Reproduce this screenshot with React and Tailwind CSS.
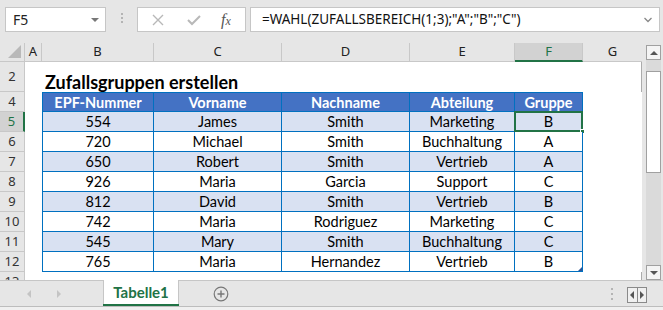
import React from "react";

const colW = ["w-[112px]", "w-[128px]", "w-[128px]", "w-[105px]", "w-[68px]"];
const headers = ["EPF-Nummer", "Vorname", "Nachname", "Abteilung", "Gruppe"];
const data = [
  ["554", "James", "Smith", "Marketing", "B"],
  ["720", "Michael", "Smith", "Buchhaltung", "A"],
  ["650", "Robert", "Smith", "Vertrieb", "A"],
  ["926", "Maria", "Garcia", "Support", "C"],
  ["812", "David", "Smith", "Vertrieb", "B"],
  ["742", "Maria", "Rodriguez", "Marketing", "C"],
  ["545", "Mary", "Smith", "Buchhaltung", "C"],
  ["765", "Maria", "Hernandez", "Vertrieb", "B"],
];

const colHeads = [
  { l: "A", w: "w-[17px]" },
  { l: "B", w: "w-[112px]" },
  { l: "C", w: "w-[128px]" },
  { l: "D", w: "w-[128px]" },
  { l: "E", w: "w-[105px]" },
  { l: "F", w: "w-[68px]", active: true },
  { l: "G", w: "w-[59px]", last: true },
];

function RowHead({ n, active, h = "h-[20px]" }) {
  return (
    <div
      className={
        "w-[25px] shrink-0 flex items-center justify-center text-[13px] font-['Noto_Sans',sans-serif] border-b border-[#c8c8c8] " +
        h +
        (active
          ? " bg-[#d2d2d2] text-[#217346] border-r-2 border-r-[#217346]"
          : " bg-[#e6e6e6] text-[#333] border-r border-r-[#c8c8c8]")
      }
    >
      {n}
    </div>
  );
}

function TableRow({ n, cells, header, band, selectedCol }) {
  return (
    <div className="flex h-[20px]">
      <RowHead n={n} active={selectedCol !== undefined} />
      <div className="w-[17px] shrink-0 bg-white" />
      {cells.map((c, i) => (
        <div
          key={i}
          className={
            colW[i] +
            " shrink-0 relative flex items-center justify-center pt-[2px] border-r border-b border-[#0070c0] font-['Lato',sans-serif] text-[14.5px] leading-none " +
            (i === 0 ? "border-l " : "") +
            (header
              ? "border-t bg-[#4472c4] text-white font-bold"
              : band
              ? "bg-[#d9e1f2] text-black"
              : "bg-white text-black")
          }
        >
          {c}
          {selectedCol === i && (
            <>
              <div className="absolute -left-[1px] -top-[1px] -right-[1px] -bottom-[1px] border-2 border-[#217346]" />
              <div className="absolute -right-[3px] -bottom-[3px] w-[5px] h-[5px] bg-[#217346] border border-white" />
            </>
          )}
          {n === 12 && i === 4 && (
            <div className="absolute right-0 bottom-0 w-0 h-0 border-l-[4px] border-l-transparent border-b-[4px] border-b-[#2f5597]" />
          )}
        </div>
      ))}
      <div className="w-[59px] shrink-0 bg-white" />
    </div>
  );
}

export default function App() {
  return (
    <div className="w-[663px] h-[310px] bg-[#e6e6e6] flex flex-col overflow-hidden select-none">
      {/* Formula bar */}
      <div className="h-[43px] shrink-0 flex items-start pt-[7px]">
        <div className="ml-[5px] w-[101px] h-[25px] bg-white border border-[#c6c6c6] flex items-center justify-between pl-[7px] pr-[6px] font-['Noto_Sans',sans-serif] text-[14px] text-[#222]">
          <span>F5</span>
          <span className="w-0 h-0 border-l-[4px] border-r-[4px] border-t-[4px] border-l-transparent border-r-transparent border-t-[#777]" />
        </div>
        <div className="ml-[15px] mt-[6px] flex flex-col gap-[2px]">
          <div className="w-[2px] h-[2px] bg-[#b4b4b4]" />
          <div className="w-[2px] h-[2px] bg-[#b4b4b4]" />
          <div className="w-[2px] h-[2px] bg-[#b4b4b4]" />
        </div>
        <div className="ml-[14px] w-[109px] h-[25px] bg-white border border-[#c6c6c6] flex items-center">
          <svg className="ml-[13px]" width="14" height="14" viewBox="0 0 14 14">
            <path d="M2 2 L12 12 M12 2 L2 12" stroke="#b8b8b8" strokeWidth="1.4" fill="none" />
          </svg>
          <svg className="ml-[21px]" width="16" height="14" viewBox="0 0 16 14">
            <path d="M2 7 L6 11 L14 3" stroke="#b8b8b8" strokeWidth="2" fill="none" />
          </svg>
          <span className="ml-[19px] font-['Liberation_Serif',serif] italic text-[#555] text-[16px] leading-none">
            f<span className="text-[12px] font-['Liberation_Serif',serif] italic">x</span>
          </span>
        </div>
        <div className="ml-[4px] w-[410px] h-[25px] bg-white border border-[#c6c6c6] flex items-center justify-between pl-[11px] pr-[6px] font-['Noto_Sans',sans-serif] text-[13.5px] text-[#111]">
          <span>=WAHL(ZUFALLSBEREICH(1;3);"A";"B";"C")</span>
          <svg width="10" height="8" viewBox="0 0 10 8">
            <path d="M1.5 2 L5 5.5 L8.5 2" stroke="#888" strokeWidth="1.3" fill="none" />
          </svg>
        </div>
      </div>

      {/* Sheet area */}
      <div className="flex h-[237px] shrink-0">
        <div className="w-[642px] shrink-0 flex flex-col overflow-hidden">
          {/* Column headers */}
          <div className="flex h-[19px] shrink-0 border-b border-[#c8c8c8] bg-[#e6e6e6]">
            <div className="w-[25px] shrink-0 border-r border-[#c8c8c8] flex items-end justify-end pr-[3px] pb-[3px]">
              <div className="w-0 h-0 border-l-[13px] border-l-transparent border-b-[13px] border-b-[#b9b9b9]" />
            </div>
            {colHeads.map((c) => (
              <div
                key={c.l}
                className={
                  c.w +
                  " shrink-0 flex items-center justify-center text-[13px] font-['Noto_Sans',sans-serif] " +
                  (c.last ? "" : "border-r border-r-[#c8c8c8] ") +
                  (c.active
                    ? "bg-[#d2d2d2] text-[#217346] border-b-2 border-b-[#217346] -mb-[1px]"
                    : "text-[#222]")
                }
              >
                {c.l}
              </div>
            ))}
          </div>
          <div className="flex-1 border-r border-[#ababab] bg-white flex flex-col">
            {/* Row 2 title */}
            <div className="flex h-[30px] shrink-0">
              <RowHead n="2" h="h-[30px]" />
              <div className="flex-1 bg-white flex items-end pl-[20px] pb-[1px]">
                <span className="font-['Lato',sans-serif] font-bold text-[18px] text-black leading-none">
                  Zufallsgruppen erstellen
                </span>
              </div>
            </div>
            <TableRow n={4} cells={headers} header />
            {data.map((r, i) => (
              <TableRow
                key={i}
                n={i + 5}
                cells={r}
                band={i % 2 === 0}
                selectedCol={i === 0 ? 4 : undefined}
              />
            ))}
            <div className="flex h-[20px]">
              <div className="w-[25px] shrink-0 bg-[#e6e6e6] border-r border-[#c8c8c8] flex items-center justify-center text-[13px] font-['Noto_Sans',sans-serif] text-[#333]">
                13
              </div>
            </div>
          </div>
        </div>
        {/* Vertical scrollbar */}
        <div className="w-[21px] shrink-0 flex flex-col pl-[4px] pr-[2px] pt-[2px]">
          <div className="h-[15px] w-[15px] bg-[#f4f4f4] border border-[#a0a0a0] flex items-center justify-center">
            <div className="w-0 h-0 border-l-[4px] border-r-[4px] border-b-[4px] border-l-transparent border-r-transparent border-b-[#555]" />
          </div>
          <div className="flex-1 bg-[#dadada] flex flex-col">
            <div className="h-[11px]" />
            <div className="h-[102px] bg-white border border-[#a0a0a0]" />
            <div className="flex-1" />
          </div>
          <div className="h-[15px] w-[15px] bg-[#f4f4f4] border border-[#a0a0a0] flex items-center justify-center">
            <div className="w-0 h-0 border-l-[4px] border-r-[4px] border-t-[4px] border-l-transparent border-r-transparent border-t-[#555]" />
          </div>
        </div>
      </div>

      {/* Tab bar */}
      <div className="h-[27px] shrink-0 border-t border-[#c6c6c6] border-b border-b-[#bdbdbd] flex items-start">
        <div className="ml-[27px] mt-[9px] w-0 h-0 border-t-[4px] border-b-[4px] border-r-[4px] border-t-transparent border-b-transparent border-r-[#c4c4c4]" />
        <div className="ml-[26px] mt-[9px] w-0 h-0 border-t-[4px] border-b-[4px] border-l-[4px] border-t-transparent border-b-transparent border-l-[#c4c4c4]" />
        <div className="ml-[42px] -mt-[1px] w-[76px] h-[26px] bg-white border-x border-[#c6c6c6] flex flex-col">
          <div className="flex-1 flex items-center justify-center font-['Lato',sans-serif] font-bold text-[15px] text-[#217346]">
            Tabelle1
          </div>
          <div className="h-[2px] mx-[-1px] bg-[#217346]" />
        </div>
        <svg className="ml-[34px] mt-[5px]" width="16" height="16" viewBox="0 0 16 16">
          <circle cx="8" cy="8" r="6.8" stroke="#777" strokeWidth="1.2" fill="none" />
          <path d="M8 4.5 V11.5 M4.5 8 H11.5" stroke="#777" strokeWidth="1.4" />
        </svg>
        <div className="ml-[382px] mt-[7px] flex flex-col gap-[3px]">
          <div className="w-[2px] h-[2px] bg-[#b4b4b4]" />
          <div className="w-[2px] h-[2px] bg-[#b4b4b4]" />
          <div className="w-[2px] h-[2px] bg-[#b4b4b4]" />
        </div>
        <div className="ml-[14px] mt-[6px] w-[20px] h-[16px] border border-[#8a8a8a] bg-[#f0f0f0] flex">
          <div className="flex-1 border-r border-[#8a8a8a] flex items-center justify-center">
            <div className="w-0 h-0 border-t-[4px] border-b-[4px] border-r-[4px] border-t-transparent border-b-transparent border-r-[#555]" />
          </div>
          <div className="flex-1 flex items-center justify-center">
            <div className="w-0 h-0 border-t-[4px] border-b-[4px] border-l-[4px] border-t-transparent border-b-transparent border-l-[#555]" />
          </div>
        </div>
      </div>
      <div className="flex-1 bg-[#f0f0f0]" />
    </div>
  );
}
